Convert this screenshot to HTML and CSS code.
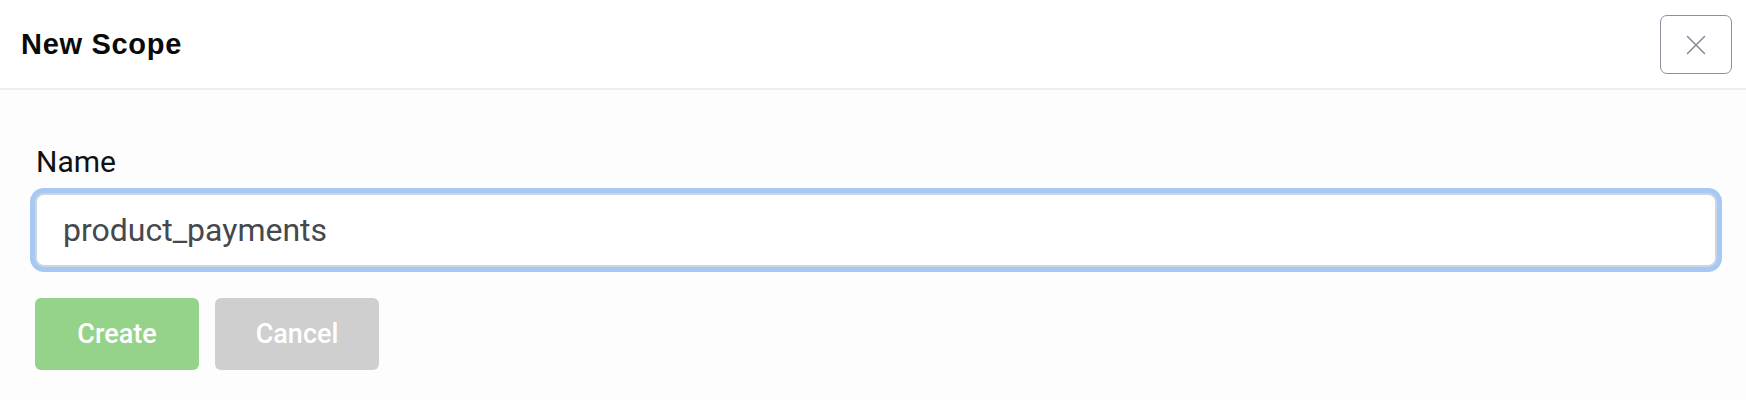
FILE: index.html
```html
<!DOCTYPE html>
<html lang="en">
<head>
    <meta charset="UTF-8">
    <meta name="viewport" content="width=device-width, initial-scale=1.0">
    <title>New Scope</title>
    <link rel="stylesheet" href="styles.css">
</head>
<body>
    <div class="modal">
        <div class="modal-header">
            <h2>New Scope</h2>
            <button class="close-btn" type="button" aria-label="Close">
                <svg width="20" height="20" viewBox="0 0 20 20">
                    <path d="M1.5 1.5 L18.5 18.5 M18.5 1.5 L1.5 18.5" stroke="#8c8c9c" stroke-width="1.6" fill="none" stroke-linecap="round"/>
                </svg>
            </button>
        </div>

        <form class="modal-body">
            <label class="field-label" for="scope-name">Name</label>
            <input class="field-input" id="scope-name" type="text" value="product_payments">

            <div class="actions">
                <button class="btn btn-create" type="button">Create</button>
                <button class="btn btn-cancel" type="button">Cancel</button>
            </div>
        </form>
    </div>
</body>
</html>
```

FILE: styles.css
```css
body {
    margin: 0;
    font-family: Roboto, "Liberation Sans", sans-serif;
    background-color: #fdfdfd;
}
.modal {
    width: 1746px;
    height: 400px;
    overflow: hidden;
}
.modal-header {
    display: flex;
    align-items: center;
    justify-content: space-between;
    height: 88px;
    padding: 0 14px 0 21px;
    background: #ffffff;
    border-bottom: 2px solid #eeeeee;
}
.modal-header h2 {
    margin: 0;
    font-family: "Liberation Sans", Arial, sans-serif;
    font-size: 29px;
    font-weight: bold;
    letter-spacing: 0.7px;
    color: #0a0a0a;
}
.close-btn {
    display: flex;
    align-items: center;
    justify-content: center;
    width: 72px;
    height: 59px;
    margin-top: 1px;
    padding: 0;
    background: #fff;
    border: 1.5px solid #8e8e9e;
    border-radius: 7px;
}
.modal-body {
    display: flex;
    flex-direction: column;
    padding: 54px 29px 0 35px;
}
.field-label {
    font-size: 30px;
    line-height: 36px;
    color: #111;
    padding-left: 1px;
}
.field-input {
    box-sizing: border-box;
    height: 74px;
    margin-top: 13px;
    padding: 0 24px 0 26px;
    font-family: Roboto, sans-serif;
    font-size: 32px;
    color: #45484d;
    background: #fff;
    border: 2px solid #cfd5de;
    border-radius: 9px;
    box-shadow: 0 0 0 5px #a7c8f5;
    outline: none;
}
.actions {
    display: flex;
    gap: 16px;
    margin-top: 31px;
}
.btn {
    width: 164px;
    height: 72px;
    border: none;
    border-radius: 6px;
    font-family: Roboto, sans-serif;
    font-size: 27px;
    font-weight: 500;
    color: #fff;
}
.btn-create {
    background: #95d38b;
}
.btn-cancel {
    background: #cfcfcf;
}
```
